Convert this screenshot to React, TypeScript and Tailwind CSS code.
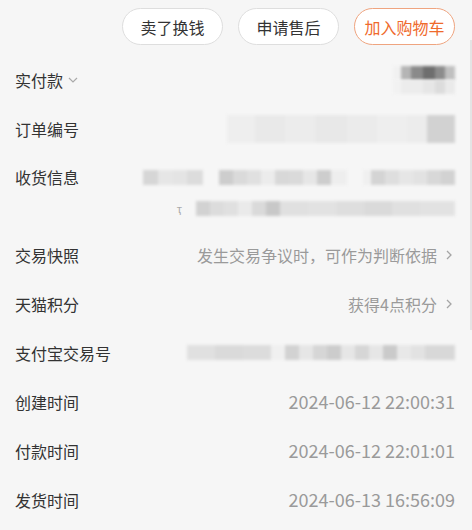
import React from 'react';

type Cell = [number, string];

function Mosaic({ cells, h = 15 }: { cells: Cell[]; h?: number }) {
  return (
    <div className="flex blur-[1.5px]">
      {cells.map(([w, c], i) => (
        <div key={i} style={{ width: w, height: h, background: c }} />
      ))}
    </div>
  );
}

function Row({ label, children, extra }: { label: string; children?: React.ReactNode; extra?: React.ReactNode }) {
  return (
    <div className="flex h-[49px] items-center justify-between">
      <div className="flex items-center gap-1 text-[16px] text-[#333]">
        {label}
        {extra}
      </div>
      {children}
    </div>
  );
}

function Value({ text }: { text: string }) {
  return (
    <div className="flex items-center gap-[6px] text-[16px] text-[#9a9a9a]">
      <span>{text}</span>
      <svg width="12" height="12" viewBox="0 0 12 12" fill="none" stroke="#a5a5a5" strokeWidth="1.3">
        <path d="M4 2l4 4-4 4" />
      </svg>
    </div>
  );
}

function Time({ text }: { text: string }) {
  return <span className="text-[18px] text-[#9a9a9a]">{text}</span>;
}

export default function App() {
  return (
    <div className="relative h-[530px] w-[472px] overflow-hidden bg-[#f6f6f6] px-[15px] font-['Noto_Sans_CJK_SC','Noto_Sans',sans-serif]">
      <div className="flex justify-end gap-[15px] pt-[8px] pr-[2px]">
        <button className="h-[37px] w-[101px] rounded-full border border-[#dedede] bg-white text-[16px] text-[#333]">卖了换钱</button>
        <button className="h-[37px] w-[101px] rounded-full border border-[#dedede] bg-white text-[16px] text-[#333]">申请售后</button>
        <button className="h-[37px] w-[101px] rounded-full border border-[#efa47f] bg-white text-[16px] text-[#ef6a2c]">加入购物车</button>
      </div>

      <div className="mt-[10px] pr-[2px]">
        <Row
          label="实付款"
          extra={
            <svg width="12" height="12" viewBox="0 0 12 12" fill="none" stroke="#aaa" strokeWidth="1.2">
              <path d="M2 4l4 4 4-4" />
            </svg>
          }
        >
          <div className="flex flex-col">
            <Mosaic h={14} cells={[[8, '#f1f1f1'], [10, '#b5b5b5'], [12, '#8a8a8a'], [12, '#6e6e6e'], [10, '#8c8c8c'], [10, '#c0c0c0']]} />
            <Mosaic h={14} cells={[[8, '#f2f2f2'], [22, '#ececec'], [12, '#e6e6e6'], [10, '#dcdcdc'], [10, '#eaeaea']]} />
          </div>
        </Row>
        <Row label="订单编号">
          <Mosaic h={28} cells={[[28, '#eeeeee'], [30, '#e9e9e9'], [30, '#ececec'], [32, '#e8e8e8'], [30, '#ebebeb'], [30, '#eeeeee'], [20, '#ececec'], [28, '#d2d2d2']]} />
        </Row>

        <div className="flex h-[77px] justify-between pt-[12px]">
          <div className="flex h-[24px] items-center text-[16px] text-[#333]">收货信息</div>
          <div className="flex flex-col items-end gap-[7px]">
            <div className="flex h-[24px] items-center gap-[16px]">
              <Mosaic cells={[[15, '#d6d6d6'], [15, '#e6e6e6'], [14, '#e4e4e4'], [16, '#dcdcdc']]} />
              <Mosaic cells={[[14, '#cdcdcd'], [14, '#dadada'], [14, '#e0e0e0'], [14, '#ececec'], [14, '#d8d8d8'], [14, '#dadada'], [14, '#e6e6e6'], [14, '#cdcdcd'], [16, '#eeeeee']]} />
              <Mosaic cells={[[8, '#f0f0f0'], [14, '#d4d4d4'], [14, '#dedede'], [14, '#e6e6e6'], [14, '#e2e2e2'], [14, '#d8d8d8'], [14, '#d2d2d2']]} />
            </div>
            <div className="flex h-[24px] items-center gap-[14px]">
              <span className="text-[11px] text-[#aaa]">ҭ</span>
              <Mosaic cells={[[14, '#d2d2d2'], [14, '#dcdcdc'], [14, '#e0e0e0'], [14, '#eaeaea'], [14, '#dadada'], [14, '#c8c8c8'], [28, '#e0e0e0'], [28, '#e2e2e2'], [28, '#dedede'], [28, '#dadada'], [28, '#e0e0e0'], [35, '#e2e2e2']]} />
            </div>
          </div>
        </div>

        <Row label="交易快照">
          <Value text="发生交易争议时，可作为判断依据" />
        </Row>
        <Row label="天猫积分">
          <Value text="获得4点积分" />
        </Row>
        <Row label="支付宝交易号">
          <Mosaic cells={[[28, '#e0e0e0'], [28, '#dadada'], [28, '#dcdcdc'], [14, '#f0f0f0'], [14, '#d2d2d2'], [14, '#e6e6e6'], [14, '#d6d6d6'], [14, '#cccccc'], [14, '#e6e6e6'], [14, '#d6d6d6'], [14, '#e6e6e6'], [14, '#cacaca'], [14, '#e8e8e8'], [14, '#e2e2e2'], [30, '#d8d8d8']]} />
        </Row>
        <Row label="创建时间">
          <Time text="2024-06-12 22:00:31" />
        </Row>
        <Row label="付款时间">
          <Time text="2024-06-12 22:01:01" />
        </Row>
        <Row label="发货时间">
          <Time text="2024-06-13 16:56:09" />
        </Row>
      </div>

      <div className="absolute right-0 top-[40px] h-[290px] w-[2px] bg-[#e4e4e4]" />
    </div>
  );
}
